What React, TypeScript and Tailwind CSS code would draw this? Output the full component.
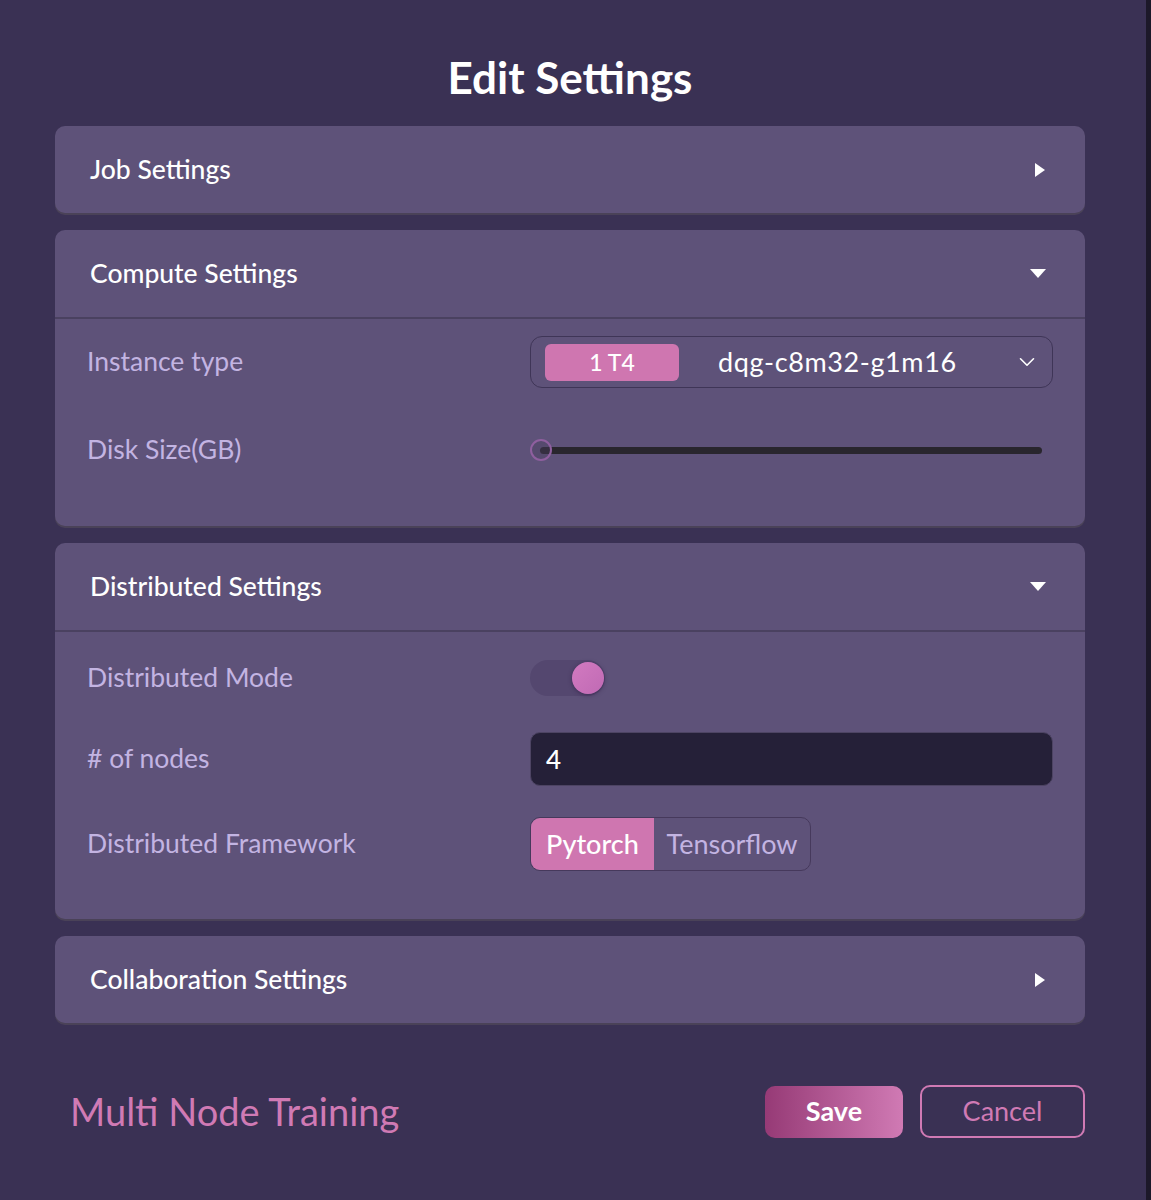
import React from "react";
import { ChevronDown } from "lucide-react";

const font = { fontFamily: "Lato, 'Open Sans', sans-serif" };

function TriRight() {
  return (
    <svg width="12" height="16" viewBox="0 0 12 16" className="mr-[1px]">
      <path d="M1 1 L11 8 L1 15 Z" fill="#ffffff" />
    </svg>
  );
}
function TriDown() {
  return (
    <svg width="18" height="11" viewBox="0 0 18 11">
      <path d="M1 1 L17 1 L9 10 Z" fill="#ffffff" />
    </svg>
  );
}

function Header({ title, open }: { title: string; open: boolean }) {
  return (
    <div
      className={`flex items-center justify-between pl-[35px] pr-[38px] ${
        open ? "h-[89px] border-b-2 border-[#4a4160]" : "h-[87px]"
      }`}
    >
      <span className="text-[26.5px] font-medium text-white">{title}</span>
      {open ? <TriDown /> : <TriRight />}
    </div>
  );
}

function Row({ label, children, className = "" }: { label: string; children: React.ReactNode; className?: string }) {
  return (
    <div className={`flex items-center ${className}`}>
      <div className="w-[443px] shrink-0 text-[26.5px] text-[#c3b4e2]">{label}</div>
      <div className="flex-1">{children}</div>
    </div>
  );
}

export default function App() {
  return (
    <div className="flex h-[1200px] w-[1151px] bg-[#3a3154]" style={font}>
      <div className="flex w-[1146px] flex-col">
        <h1 className="mt-[52px] h-[50px] pr-[6px] text-center text-[44px] font-bold leading-[50px] text-white">
          Edit Settings
        </h1>
        <div className="ml-[55px] mt-[24px] flex w-[1030px] flex-col gap-[17px]">
          {/* Job Settings */}
          <div className="rounded-[10px] bg-[#5e5279] shadow-[0_2px_0_#4a4258]">
            <Header title="Job Settings" open={false} />
          </div>

          {/* Compute Settings */}
          <div className="rounded-[10px] bg-[#5e5279] shadow-[0_2px_0_#4a4258]">
            <Header title="Compute Settings" open={true} />
            <div className="flex flex-col gap-[36px] pb-[50px] pl-[32px] pr-[32px] pt-[17px]">
              <Row label="Instance type">
                <div className="flex h-[52px] items-center rounded-[12px] border border-[#3f3557] pl-[14px] pr-[12px]">
                  <div className="flex h-[37px] w-[134px] items-center justify-center rounded-[6px] bg-[#cf76b0] text-[23px] font-medium text-white">
                    1 T4
                  </div>
                  <div className="ml-[39px] flex-1 text-[27px] tracking-[0.6px] text-white">dqg-c8m32-g1m16</div>
                  <ChevronDown size={26} strokeWidth={1.5} color="#ffffff" />
                </div>
              </Row>
              <Row label="Disk Size(GB)">
                <div className="relative flex h-[52px] items-center">
                  <div className="ml-[10px] mr-[11px] h-[7px] flex-1 rounded-full bg-[#29262e]" />
                  <div className="absolute left-0 top-1/2 h-[22px] w-[22px] -translate-y-1/2 rounded-full border-2 border-[#8f5f9f] bg-[#4a3f5f]/40" />
                </div>
              </Row>
            </div>
          </div>

          {/* Distributed Settings */}
          <div className="rounded-[10px] bg-[#5e5279] shadow-[0_2px_0_#4a4258]">
            <Header title="Distributed Settings" open={true} />
            <div className="flex flex-col pb-[48px] pl-[32px] pr-[32px] pt-[19px]">
              <Row label="Distributed Mode" className="h-[54px]">
                <div className="relative h-[36px] w-[75px] rounded-full bg-[#54476f]">
                  <div className="absolute right-[1px] top-[2px] h-[32px] w-[32px] rounded-full bg-gradient-to-br from-[#d27ac0] to-[#c06ab4] shadow-[0_1px_4px_rgba(40,20,60,0.5)]" />
                </div>
              </Row>
              <Row label="# of nodes" className="mt-[27px] h-[54px]">
                <div className="flex h-[54px] items-center rounded-[10px] border border-[#4d4463] bg-[#252038] pl-[15px] text-[26px] font-medium text-white">
                  4
                </div>
              </Row>
              <Row label="Distributed Framework" className="mt-[31px] h-[54px]">
                <div className="flex h-[54px] w-[281px] overflow-hidden rounded-[10px] border border-[#46395c] text-[27px]">
                  <div className="flex w-[123px] items-center justify-center bg-[#cf76b0] font-medium text-white">Pytorch</div>
                  <div className="flex flex-1 items-center justify-center text-[#c3b4e2]">Tensorflow</div>
                </div>
              </Row>
            </div>
          </div>

          {/* Collaboration Settings */}
          <div className="rounded-[10px] bg-[#5e5279] shadow-[0_2px_0_#4a4258]">
            <Header title="Collaboration Settings" open={false} />
          </div>
        </div>

        {/* Footer */}
        <div className="ml-[70px] mr-[61px] mt-[60px] flex items-center">
          <div className="flex-1 text-[38px] text-[#d07ab4]">Multi Node Training</div>
          <button className="flex h-[52px] w-[138px] items-center justify-center rounded-[10px] bg-gradient-to-r from-[#963a76] to-[#d07ab4] text-[27px] font-bold text-white">
            Save
          </button>
          <button className="ml-[17px] flex h-[53px] w-[165px] items-center justify-center rounded-[10px] border-2 border-[#d07ab4] text-[27px] text-[#d07ab4]">
            Cancel
          </button>
        </div>
      </div>
      <div className="w-[5px] bg-[#1c1829]" />
    </div>
  );
}
